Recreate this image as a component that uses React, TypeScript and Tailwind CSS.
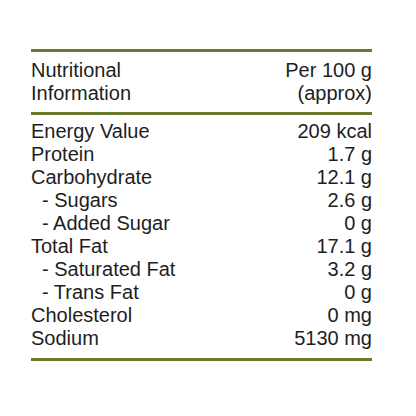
const rows: { label: string; value: string; sub?: boolean }[] = [
  { label: "Energy Value", value: "209 kcal" },
  { label: "Protein", value: "1.7 g" },
  { label: "Carbohydrate", value: "12.1 g" },
  { label: "- Sugars", value: "2.6 g", sub: true },
  { label: "- Added Sugar", value: "0 g", sub: true },
  { label: "Total Fat", value: "17.1 g" },
  { label: "- Saturated Fat", value: "3.2 g", sub: true },
  { label: "- Trans Fat", value: "0 g", sub: true },
  { label: "Cholesterol", value: "0 mg" },
  { label: "Sodium", value: "5130 mg" },
];

export default function App() {
  return (
    <div className="w-[416px] h-[416px] bg-white pt-[49px] font-['Liberation_Sans',Arial,sans-serif] text-[20px] leading-[23px] text-[#1e1e1e]">
      <div className="ml-[31px] w-[341px]">
        <div className="border-t-[3px] border-b-[3px] border-[#6b7a2e] pt-[7px] pb-[7px] flex justify-between">
          <div>
            Nutritional
            <br />
            Information
          </div>
          <div className="text-right">
            Per 100 g
            <br />
            (approx)
          </div>
        </div>
        <div className="border-b-[3px] border-[#6b7a2e] pt-[5px] pb-[8px]">
          {rows.map((r) => (
            <div key={r.label} className="flex justify-between">
              <span className={r.sub ? "pl-[11px]" : ""}>{r.label}</span>
              <span>{r.value}</span>
            </div>
          ))}
        </div>
      </div>
    </div>
  );
}
